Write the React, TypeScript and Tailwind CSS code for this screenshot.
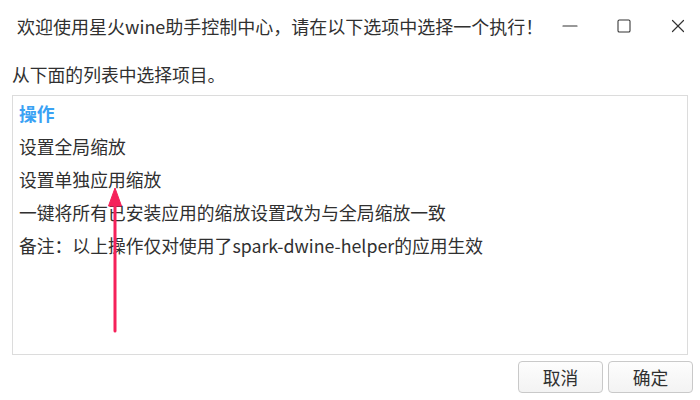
import { Minus, Square, X } from "lucide-react";

const rows = [
  "设置全局缩放",
  "设置单独应用缩放",
  "一键将所有已安装应用的缩放设置改为与全局缩放一致",
  "备注：以上操作仅对使用了spark-dwine-helper的应用生效",
];

export default function App() {
  return (
    <div
      className="relative flex h-[400px] w-[700px] flex-col overflow-hidden bg-white text-[#303030]"
      style={{ fontFamily: '"Noto Sans CJK SC", "Noto Sans", sans-serif' }}
    >
      <div className="flex h-[52px] items-center pl-[17px]">
        <span className="flex-1 whitespace-nowrap text-[18px]">欢迎使用星火wine助手控制中心，请在以下选项中选择一个执行！</span>
        <div className="flex items-center text-[#333]">
          <button className="flex h-[40px] w-[54px] items-center justify-center"><Minus size={24} strokeWidth={1.2} /></button>
          <button className="flex h-[40px] w-[54px] items-center justify-center"><Square size={16} strokeWidth={1.6} /></button>
          <button className="mr-[-2px] flex h-[40px] w-[54px] items-center justify-center"><X size={22} strokeWidth={1.3} /></button>
        </div>
      </div>
      <div className="px-[12px] pt-[10px]">
        <p className="whitespace-nowrap text-[17.8px] leading-[24px]">从下面的列表中选择项目。</p>
        <div className="mt-[9px] h-[260px] border border-[#dcdcdc] px-[6px] pt-[1px]">
          <p className="h-[33px] text-[17.8px] font-bold leading-[33px] text-[#3aa2f4]">操作</p>
          {rows.map((r) => (
            <p key={r} className="h-[33px] whitespace-nowrap text-[17.8px] leading-[33px]">{r}</p>
          ))}
        </div>
      </div>
      <div className="flex justify-end gap-[5px] pr-[7px] pt-[6px]">
        <button className="h-[32px] w-[85px] rounded-[4px] border border-[#c9c9c9] bg-gradient-to-b from-[#fdfdfd] to-[#f3f3f3] text-[17.8px]">取消</button>
        <button className="h-[32px] w-[85px] rounded-[4px] border border-[#c9c9c9] bg-gradient-to-b from-[#fdfdfd] to-[#f3f3f3] text-[17.8px]">确定</button>
      </div>
      <svg className="absolute left-[105px] top-[186px]" width="20" height="148" viewBox="0 0 20 148">
        <line x1="10" y1="14" x2="10" y2="145" stroke="#f5215a" strokeWidth="3" strokeLinecap="round" />
        <path d="M10 2 L16.5 20 L3.5 20 Z" fill="#f5215a" stroke="#f5215a" strokeWidth="1" strokeLinejoin="round" />
      </svg>
    </div>
  );
}
